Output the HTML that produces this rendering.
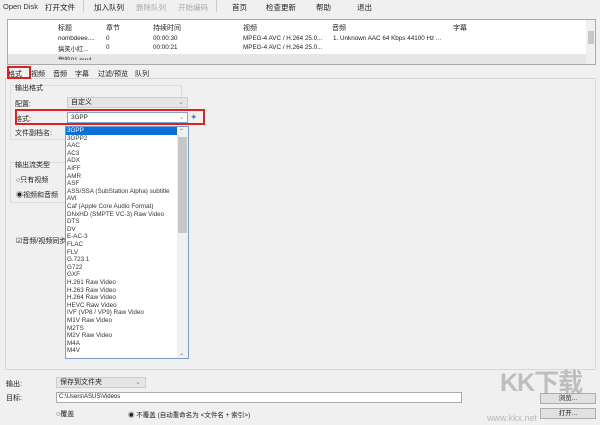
<!DOCTYPE html>
<html><head><meta charset="utf-8"><style>
*{margin:0;padding:0;box-sizing:border-box}
body{width:600px;height:425px;background:#f0f0f0;font-family:"Liberation Sans","Noto Sans CJK SC",sans-serif;font-size:7px;color:#222;position:relative;overflow:hidden}
.a{position:absolute;white-space:nowrap}
.li{position:absolute;left:67px;height:7.6px;line-height:7.6px;font-size:6.3px;color:#333}
</style></head><body>
<!-- toolbar -->
<div class="a" style="left:3px;top:2px;font-size:7.5px;color:#333">Open Disk</div>
<div class="a" style="left:45px;top:2px;font-size:7.5px">打开文件</div>
<div class="a" style="left:83px;top:0;width:1px;height:12px;background:#ccc"></div>
<div class="a" style="left:94px;top:2px;font-size:7.5px">加入队列</div>
<div class="a" style="left:136px;top:2px;font-size:7.5px;color:#aaa">删除队列</div>
<div class="a" style="left:178px;top:2px;font-size:7.5px;color:#aaa">开始编码</div>
<div class="a" style="left:216px;top:0;width:1px;height:12px;background:#ccc"></div>
<div class="a" style="left:232px;top:2px;font-size:7.5px">首页</div>
<div class="a" style="left:266px;top:2px;font-size:7.5px">检查更新</div>
<div class="a" style="left:316px;top:2px;font-size:7.5px">帮助</div>
<div class="a" style="left:357px;top:2px;font-size:7.5px">退出</div>
<!-- file list -->
<div class="a" style="left:7px;top:19px;width:589px;height:46px;background:#fff;border:1px solid #aaa"></div>
<div class="a" style="left:448px;top:20px;width:120px;height:34px;background:#fff"></div>
<div class="a" style="left:586px;top:20px;width:9px;height:44px;background:#f0f0f0"></div>
<div class="a" style="left:588px;top:31px;width:6px;height:13px;background:#c8c8c8"></div>
<div class="a" style="left:8px;top:54px;width:578px;height:10px;background:#e6e6e6"></div>
<div class="a" style="left:58px;top:23px">标题</div><div class="a" style="left:106px;top:23px">章节</div><div class="a" style="left:153px;top:23px">持续时间</div><div class="a" style="left:243px;top:23px">视频</div><div class="a" style="left:332px;top:23px">音频</div><div class="a" style="left:453px;top:23px">字幕</div>
<div class="a" style="left:58px;top:35px;font-size:6.3px">nombdeee....</div><div class="a" style="left:106px;top:35px;font-size:6.3px">0</div><div class="a" style="left:153px;top:35px;font-size:6.3px">00:00:30</div><div class="a" style="left:243px;top:35px;font-size:6.3px">MPEG-4 AVC / H.264 25.0...</div><div class="a" style="left:333px;top:35px;font-size:6.3px">1. Unknown AAC  64 Kbps 44100 Hz ...</div>
<div class="a" style="left:58px;top:44px;font-size:6.3px">搞笑小红...</div><div class="a" style="left:106px;top:44px;font-size:6.3px">0</div><div class="a" style="left:153px;top:44px;font-size:6.3px">00:00:21</div><div class="a" style="left:243px;top:44px;font-size:6.3px">MPEG-4 AVC / H.264 25.0...</div>
<div class="a" style="left:58px;top:55px;font-size:6.3px;height:5px;overflow:hidden">我的01.mp4</div>
<!-- tabs -->
<div class="a" style="left:5px;top:78px;width:591px;height:292px;border:1px solid #d8d8d8"></div>
<div class="a" style="left:8px;top:69px;font-size:7px">格式</div>
<div class="a" style="left:7px;top:66px;width:24px;height:13px;border:2px solid #d22"></div>
<div class="a" style="left:31px;top:69px">视频</div><div class="a" style="left:53px;top:69px">音频</div><div class="a" style="left:75px;top:69px">字幕</div><div class="a" style="left:98px;top:69px">过滤/预览</div><div class="a" style="left:135px;top:69px">队列</div>
<!-- output format group -->
<div class="a" style="left:10px;top:85px;width:172px;height:55px;border:1px solid #ddd"></div>
<div class="a" style="left:15px;top:83px">输出格式</div>
<div class="a" style="left:15px;top:99px">配置:</div>
<div class="a" style="left:67px;top:97px;width:121px;height:11px;background:#e5e5e5;border:1px solid #ccc;padding-left:3px;line-height:9px">自定义<span style="position:absolute;right:3px;color:#888">⌄</span></div>
<div class="a" style="left:67px;top:112px;width:121px;height:11px;background:#fff;border:1px solid #7aa7d8;padding-left:3px;line-height:9px;font-size:6.3px">3GPP<span style="position:absolute;right:3px;color:#888">⌄</span></div>
<div class="a" style="left:190px;top:112px;width:12px;height:10px;color:#5a7fb0;font-size:9px;line-height:10px">✦</div>
<div class="a" style="left:15px;top:114px">格式:</div>
<div class="a" style="left:15px;top:109px;width:190px;height:16px;border:2px solid #d22"></div>
<div class="a" style="left:15px;top:128px">文件副档名:</div>
<!-- stream type -->
<div class="a" style="left:10px;top:162px;width:172px;height:41px;border:1px solid #ddd"></div>
<div class="a" style="left:15px;top:160px">输出流类型</div>
<div class="a" style="left:16px;top:175px">○只有视频</div>
<div class="a" style="left:16px;top:190px">◉视频和音频</div>
<div class="a" style="left:16px;top:236px">☑音频/视频同步</div>
<!-- dropdown list -->
<div class="a" style="left:65px;top:126px;width:124px;height:233px;background:#fff;border:1px solid #7a9cc8"></div>
<div class="a" style="left:66px;top:127px;width:111px;height:7.6px;background:#0a6fd6"></div>
<div class="a" style="left:177px;top:127px;width:11px;height:231px;background:#f0f0f0"></div>
<div class="a" style="left:178px;top:137px;width:9px;height:96px;background:#c6c6c6"></div>
<div class="a" style="left:179px;top:128px;font-size:6px;color:#666">⌃</div>
<div class="a" style="left:179px;top:350px;font-size:6px;color:#666">⌄</div>
<div class="li" style="top:127px;color:#fff">3GPP</div>
<div class="li" style="top:134.6px">3GPP2</div>
<div class="li" style="top:142.2px">AAC</div>
<div class="li" style="top:149.8px">AC3</div>
<div class="li" style="top:157.4px">ADX</div>
<div class="li" style="top:165px">AIFF</div>
<div class="li" style="top:172.6px">AMR</div>
<div class="li" style="top:180.2px">ASF</div>
<div class="li" style="top:187.8px">ASS/SSA (SubStation Alpha) subtitle</div>
<div class="li" style="top:195.4px">AVI</div>
<div class="li" style="top:203px">Caf (Apple Core Audio Format)</div>
<div class="li" style="top:210.6px">DNxHD (SMPTE VC-3) Raw Video</div>
<div class="li" style="top:218.2px">DTS</div>
<div class="li" style="top:225.8px">DV</div>
<div class="li" style="top:233.4px">E-AC-3</div>
<div class="li" style="top:241px">FLAC</div>
<div class="li" style="top:248.6px">FLV</div>
<div class="li" style="top:256.2px">G.723.1</div>
<div class="li" style="top:263.8px">G722</div>
<div class="li" style="top:271.4px">GXF</div>
<div class="li" style="top:279px">H.261 Raw Video</div>
<div class="li" style="top:286.6px">H.263 Raw Video</div>
<div class="li" style="top:294.2px">H.264 Raw Video</div>
<div class="li" style="top:301.8px">HEVC Raw Video</div>
<div class="li" style="top:309.4px">IVF (VP8 / VP9) Raw Video</div>
<div class="li" style="top:317px">M1V Raw Video</div>
<div class="li" style="top:324.6px">M2TS</div>
<div class="li" style="top:332.2px">M2V Raw Video</div>
<div class="li" style="top:339.8px">M4A</div>
<div class="li" style="top:347.4px">M4V</div>
<!-- bottom -->
<div class="a" style="left:6px;top:379px">输出:</div>
<div class="a" style="left:56px;top:377px;width:90px;height:11px;background:#e5e5e5;border:1px solid #ccc;padding-left:3px;line-height:9px">保存到文件夹<span style="position:absolute;right:4px;color:#888">⌄</span></div>
<div class="a" style="left:6px;top:393px">目标:</div>
<div class="a" style="left:56px;top:392px;width:406px;height:11px;background:#fff;border:1px solid #aaa;padding-left:2px;line-height:9px;font-size:6px">C:\Users\ASUS\Videos</div>
<div class="a" style="left:540px;top:393px;width:56px;height:11px;background:#e1e1e1;border:1px solid #adadad;text-align:center;line-height:9px;font-size:6.5px">浏览...</div>
<div class="a" style="left:540px;top:408px;width:56px;height:11px;background:#e1e1e1;border:1px solid #adadad;text-align:center;line-height:9px;font-size:6.5px">打开...</div>
<div class="a" style="left:56px;top:409px">○覆盖</div>
<div class="a" style="left:128px;top:409px;font-size:6.5px">◉ 不覆盖 (自动重命名为 &lt;文件名 + 索引&gt;)</div>
<!-- watermark -->
<div class="a" style="left:500px;top:363px;font-size:25px;font-weight:bold;color:rgba(150,150,150,0.55);letter-spacing:-1px">KK下载</div>
<div class="a" style="left:487px;top:413px;font-size:9px;color:rgba(150,150,150,0.6)">www.kkx.net</div>
</body></html>
